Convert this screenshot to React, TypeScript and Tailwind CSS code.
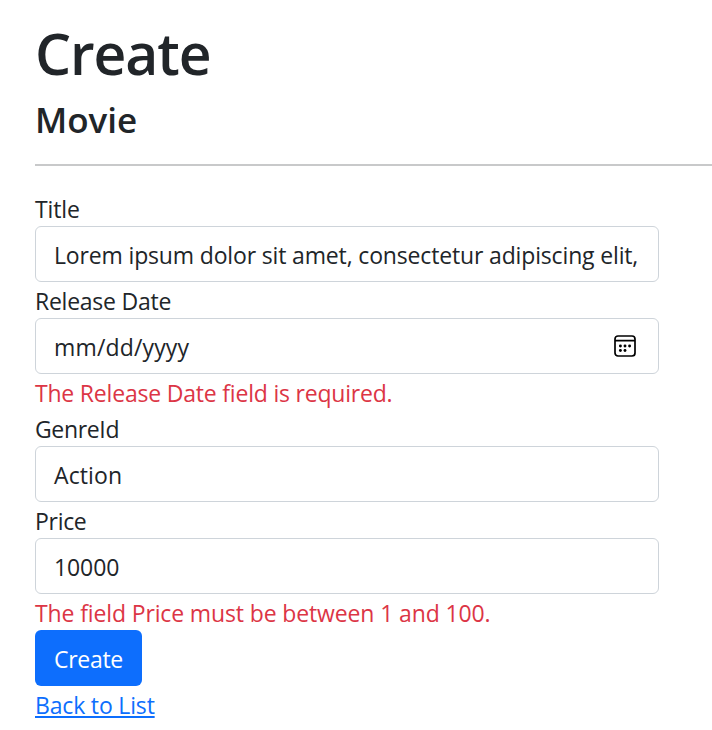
import type { ReactNode } from "react";

function Label({ children }: { children: ReactNode }) {
  return <label className="block h-9 whitespace-nowrap">{children}</label>;
}

function Control({ children }: { children: ReactNode }) {
  return (
    <div className="flex h-14 w-[624px] items-center justify-between overflow-hidden rounded-[6px] border border-[#ced4da] bg-white px-[18px] pt-[2px] whitespace-nowrap">
      {children}
    </div>
  );
}

function FieldError({ children }: { children: ReactNode }) {
  return <p className="h-9 whitespace-nowrap text-[#dc3545]">{children}</p>;
}

function CalendarIcon() {
  return (
    <svg className="mr-[3px] mb-[2px]" width="24" height="24" viewBox="0 0 24 24" fill="none">
      <rect x="2" y="2" width="20" height="20" rx="3" stroke="#000" strokeWidth="1.7" />
      <path d="M2 6.7H22" stroke="#000" strokeWidth="1.7" />
      <g fill="#000">
        <circle cx="7.4" cy="12" r="1.45" />
        <circle cx="12" cy="12" r="1.45" />
        <circle cx="16.6" cy="12" r="1.45" />
        <circle cx="7.4" cy="16.5" r="1.45" />
        <circle cx="12" cy="16.5" r="1.45" />
      </g>
    </svg>
  );
}

export default function App() {
  return (
    <main className="h-[730px] overflow-hidden bg-white pl-[35px] pt-[18px] font-['Open_Sans','Noto_Sans',sans-serif] text-[23px] leading-[38px] text-[#212529]">
      <h1 className="h-[72px] text-[57px] leading-[70px] font-semibold tracking-[-1.1px]">Create</h1>
      <h4 className="mt-[9px] h-[43px] text-[35px] leading-[41px] font-semibold">Movie</h4>
      <hr className="mt-[22px] mb-6 h-[2px] border-0 bg-[#c8c9ca]" />
      <form>
        <Label><span className="tracking-[-0.1px]">Title</span></Label>
        <Control><span className="tracking-[-0.155px]">Lorem ipsum dolor sit amet, consectetur adipiscing elit,</span></Control>
        <Label><span className="tracking-[-0.25px]">Release Date</span></Label>
        <Control><span className="tracking-[0.15px]">mm/dd/yyyy</span><CalendarIcon /></Control>
        <FieldError><span className="tracking-[-0.2px]">The Release Date field is required.</span></FieldError>
        <Label><span className="tracking-[-0.35px]">GenreId</span></Label>
        <Control><span className="tracking-[0.1px]">Action</span></Control>
        <Label><span className="tracking-[-0.3px]">Price</span></Label>
        <Control><span className="tracking-[-0.1px]">10000</span></Control>
        <FieldError><span className="tracking-[-0.13px]">The field Price must be between 1 and 100.</span></FieldError>
        <button type="button" className="block h-14 w-[107px] rounded-[6px] bg-[#0d6efd] pt-[2px] tracking-[-0.3px] text-white">Create</button>
      </form>
      <a className="block w-fit whitespace-nowrap tracking-[-0.17px] text-[#0d6efd] underline decoration-2 underline-offset-2">Back to List</a>
    </main>
  );
}
